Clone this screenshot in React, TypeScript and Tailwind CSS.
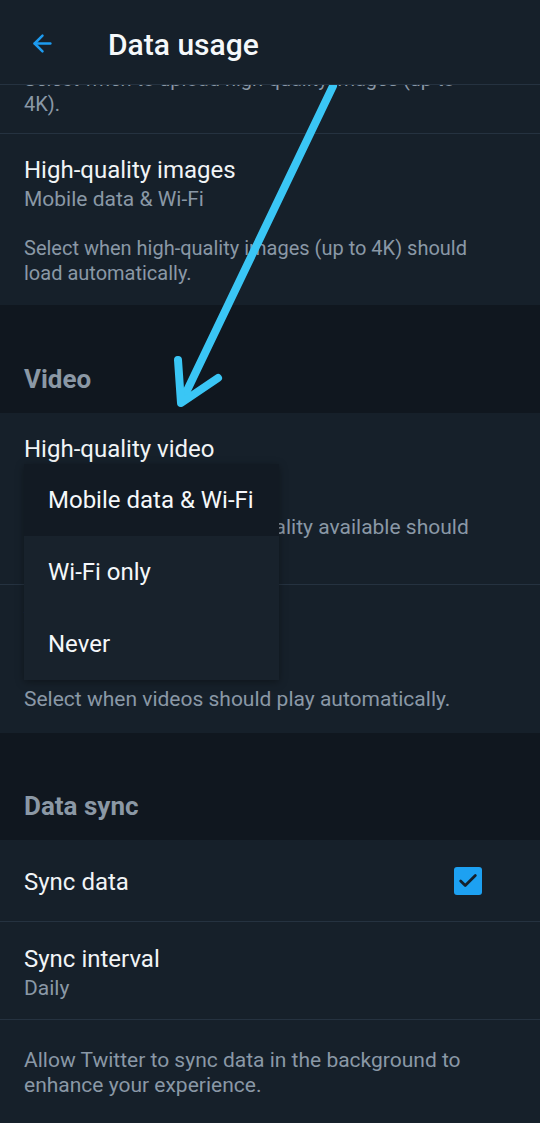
import { ArrowLeft, Check } from "lucide-react";

const font = { fontFamily: "Roboto, 'Noto Sans', sans-serif" };

function Row({
  title,
  value,
  desc,
  descSize = "text-[21px]",
  h,
  last,
}: {
  title: string;
  value?: string;
  desc?: string[];
  descSize?: string;
  h: string;
  last?: boolean;
}) {
  return (
    <div className={`px-6 pt-[22px] ${h} ${last ? "" : "border-b border-[#253240]"}`}>
      <p className="text-[24px] leading-[28px] text-[#f1f4f6]">{title}</p>
      {value && <p className="text-[21px] leading-[30px] text-[#8a98a6]">{value}</p>}
      {desc && (
        <p className={`mt-[22px] whitespace-nowrap leading-[25px] text-[#8a98a6] ${descSize}`}>
          {desc.map((l, i) => (
            <span key={i} className="block">
              {l}
            </span>
          ))}
        </p>
      )}
    </div>
  );
}

function SectionHeader({ label, h }: { label: string; h: string }) {
  return (
    <div className={`flex items-end bg-[#10171f] px-6 pb-[18px] ${h}`}>
      <p className="text-[26px] font-bold leading-[32px] text-[#8b98a5]">{label}</p>
    </div>
  );
}

export default function App() {
  return (
    <div className="relative h-[1123px] w-[540px] overflow-hidden bg-[#16202a]" style={font}>
      {/* header */}
      <div className="relative z-20 flex h-[85px] items-center border-b border-[#253240] bg-[#16202a]">
        <ArrowLeft className="ml-[29px] mt-[2px] h-[27px] w-[27px] text-[#1d9bf0]" strokeWidth={2.2} />
        <h1 className="ml-[52px] mt-[4px] text-[30px] font-medium text-[#f5f8fa]">Data usage</h1>
      </div>

      {/* partially scrolled-off block */}
      <div className="flex h-[49px] flex-col border-b border-[#253240] px-6">
        <p className="-mt-[18px] whitespace-nowrap text-[20px] leading-[25px] text-[#8a98a6]">
          <span className="block">Select when to upload high-quality images (up to</span>
          <span className="block">4K).</span>
        </p>
      </div>

      <Row
        title="High-quality images"
        value="Mobile data & Wi-Fi"
        desc={["Select when high-quality images (up to 4K) should", "load automatically."]}
        descSize="text-[20px]"
        h="h-[171px]"
        last
      />

      <SectionHeader label="Video" h="h-[108px]" />

      <Row
        title="High-quality video"
        value="Mobile data & Wi-Fi"
        desc={["Select when the highest quality available should", "play."]}
        h="h-[172px]"
      />
      <Row
        title="Video autoplay"
        value="Mobile data & Wi-Fi"
        desc={["Select when videos should play automatically."]}
        h="h-[148px]"
        last
      />

      <SectionHeader label="Data sync" h="h-[107px]" />

      <div className="flex h-[82px] items-center justify-between border-b border-[#253240] pl-6 pr-[58px]">
        <p className="mt-[2px] text-[24px] text-[#f1f4f6]">Sync data</p>
        <div className="flex h-[28px] w-[28px] items-center justify-center rounded-[3px] bg-[#1da1f2]">
          <Check className="h-[22px] w-[22px] text-[#15202b]" strokeWidth={3} />
        </div>
      </div>
      <div className="h-[98px] border-b border-[#253240] px-6 pt-[23px]">
        <p className="text-[24px] leading-[28px] text-[#f1f4f6]">Sync interval</p>
        <p className="text-[21px] leading-[30px] text-[#8a98a6]">Daily</p>
      </div>
      <div className="px-6 pt-[28px]">
        <p className="whitespace-nowrap text-[21px] leading-[25px] text-[#8a98a6]">
          <span className="block">Allow Twitter to sync data in the background to</span>
          <span className="block">enhance your experience.</span>
        </p>
      </div>

      {/* dropdown menu */}
      <div className="absolute left-[24px] top-[464px] z-10 w-[255px] bg-[#18222c] shadow-[0_2px_8px_rgba(0,0,0,0.35)]">
        {["Mobile data & Wi-Fi", "Wi-Fi only", "Never"].map((o, i) => (
          <div
            key={o}
            className={`flex h-[72px] items-center pl-6 text-[24px] text-[#f5f8fa] ${i === 0 ? "bg-[#121a23]" : ""}`}
          >
            {o}
          </div>
        ))}
      </div>

      {/* annotation arrow */}
      <svg className="pointer-events-none absolute left-0 top-0 z-10 h-[1123px] w-[540px]" viewBox="0 0 540 1123">
        <g stroke="#3ac6f5" strokeWidth="8" strokeLinecap="round" strokeLinejoin="round" fill="none">
          <path d="M333 86 L182 401" />
          <path d="M178 360 L181 403 L218 378" />
        </g>
      </svg>
    </div>
  );
}
